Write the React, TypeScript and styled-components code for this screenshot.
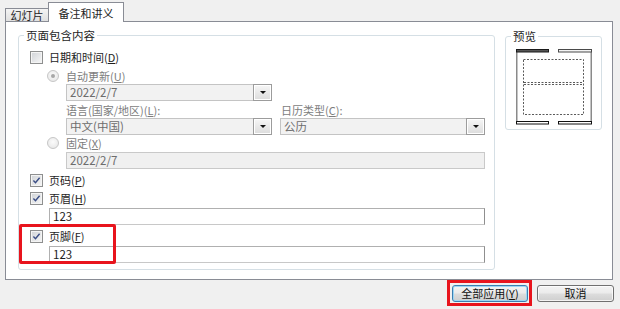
import React from 'react';
import styled, { createGlobalStyle } from 'styled-components';

const FONT = `"Microsoft YaHei", "Noto Sans CJK SC", "Noto Sans", sans-serif`;

const GlobalStyle = createGlobalStyle`
  html, body {
    margin: 0;
    padding: 0;
    background: #f0f0f0;
  }
  body {
    font-family: ${FONT};
  }
`;

const Dialog = styled.div`
  width: 620px;
  height: 309px;
  box-sizing: border-box;
  padding: 2px 6px 0 5px;
  background: #f0f0f0;
  font-family: ${FONT};
  font-size: 11px;
  color: #1e1e1e;
  display: flex;
  flex-direction: column;
  overflow: hidden;
`;

const TabBar = styled.div`
  display: flex;
  align-items: flex-end;
  height: 19px;
`;

const Tab = styled.div<{ $active?: boolean }>`
  box-sizing: border-box;
  position: relative;
  z-index: ${p => (p.$active ? 2 : 1)};
  width: ${p => (p.$active ? '76px' : '44px')};
  height: ${p => (p.$active ? '20px' : '13px')};
  margin-left: ${p => (p.$active ? '-1px' : '0')};
  margin-bottom: ${p => (p.$active ? '-1px' : '0')};
  padding-top: ${p => (p.$active ? '2px' : '0')};
  border: 1px solid #898c95;
  border-bottom: none;
  background: ${p => (p.$active ? '#fff' : 'linear-gradient(#f4f4f4, #e0e0e0)')};
  display: flex;
  align-items: center;
  justify-content: center;
  font-size: 11px;
  line-height: 1;
  color: #1e1e1e;
`;

const TabPanel = styled.div`
  box-sizing: border-box;
  width: 608px;
  height: 259px;
  border: 1px solid #898c95;
  background: #fff;
  padding: 6px 0 0 12px;
  display: flex;
  align-items: flex-start;
  gap: 10px;
`;

const Group = styled.fieldset<{ $width: number; $top?: number }>`
  box-sizing: border-box;
  flex: 0 0 auto;
  width: ${p => p.$width}px;
  min-width: 0;
  margin: ${p => p.$top ?? 0}px 0 0 0;
  padding: 0;
  border: 1px solid #d5dfe5;
  border-radius: 3px;
`;

const GroupTitle = styled.legend`
  margin-left: 5px;
  padding: 0 2px;
  font-size: 11.5px;
  line-height: 14px;
  color: #1e1e1e;
`;

const GroupBody = styled.div`
  padding: 0 9px 6px 11px;
`;

const PreviewBody = styled.div`
  padding: 6px 0 4px 1px;
  display: flex;
  justify-content: center;
`;

const Row = styled.div<{ $indent?: number; $top?: number; $gap?: number }>`
  display: flex;
  align-items: center;
  height: 16px;
  margin-left: ${p => p.$indent ?? 0}px;
  margin-top: ${p => p.$top ?? 0}px;
  gap: ${p => p.$gap ?? 6}px;
`;

const Label = styled.span<{ $disabled?: boolean; $width?: number }>`
  font-size: 11px;
  line-height: 1;
  white-space: nowrap;
  color: ${p => (p.$disabled ? '#7d7d7d' : '#1e1e1e')};
  ${p => (p.$width ? `width: ${p.$width}px; flex: 0 0 auto;` : '')}
`;

const CheckBox = styled.span`
  box-sizing: border-box;
  flex: 0 0 auto;
  width: 13px;
  height: 13px;
  border: 1px solid #8e8f8f;
  background: linear-gradient(135deg, #cfd2d6 0%, #f7f7f7 100%);
  box-shadow: inset 0 0 0 1px #f4f4f4;
  display: flex;
  align-items: center;
  justify-content: center;
`;

const Radio = styled.span<{ $checked?: boolean }>`
  box-sizing: border-box;
  flex: 0 0 auto;
  width: 12px;
  height: 12px;
  border-radius: 50%;
  border: 1px solid #c6c6c6;
  background: radial-gradient(circle at 50% 40%, #fbfbfb, #e4e4e4);
  display: flex;
  align-items: center;
  justify-content: center;

  &::after {
    content: '';
    width: 4px;
    height: 4px;
    border-radius: 50%;
    background: #a8a8a8;
    display: ${p => (p.$checked ? 'block' : 'none')};
  }
`;

const Combo = styled.div<{ $width?: number; $indent?: number; $top?: number }>`
  box-sizing: border-box;
  display: flex;
  align-items: center;
  height: 17px;
  width: ${p => (p.$width ? `${p.$width}px` : 'auto')};
  flex: ${p => (p.$width ? '0 0 auto' : '1 1 auto')};
  margin-left: ${p => p.$indent ?? 0}px;
  margin-top: ${p => p.$top ?? 0}px;
  border: 1px solid #c4c4c4;
  background: #f2f2f2;
  color: #6d6d6d;
  padding-left: 3px;
`;

const ComboValue = styled.span`
  flex: 1;
  font-size: 11.5px;
  line-height: 1;
  white-space: nowrap;
`;

const DropButton = styled.span`
  box-sizing: border-box;
  width: 19px;
  height: 17px;
  margin: -1px -1px -1px 0;
  border: 1px solid #9c9c9c;
  background: linear-gradient(#f6f6f6, #dcdcdc);
  box-shadow: inset 0 0 0 1px #fff;
  display: flex;
  align-items: center;
  justify-content: center;

  &::after {
    content: '';
    border-left: 3px solid transparent;
    border-right: 3px solid transparent;
    border-top: 3px solid #111;
  }
`;

const ComboRow = styled.div<{ $indent: number }>`
  display: flex;
  gap: 8px;
  margin-left: ${p => p.$indent}px;
`;

const Field = styled.div<{ $indent: number; $top?: number; $disabled?: boolean }>`
  box-sizing: border-box;
  height: 17px;
  margin: ${p => p.$top ?? 0}px 0 0 ${p => p.$indent}px;
  border: 1px solid ${p => (p.$disabled ? '#c9c9c9' : '#b0b0b0')};
  border-right-color: ${p => (p.$disabled ? '#c9c9c9' : '#8f8f8f')};
  border-bottom-color: ${p => (p.$disabled ? '#c9c9c9' : '#c8c8c8')};
  background: ${p => (p.$disabled ? '#f0f0f0' : '#fff')};
  color: ${p => (p.$disabled ? '#6d6d6d' : '#1e1e1e')};
  padding-left: 3px;
  display: flex;
  align-items: center;
  font-size: 11.5px;
  line-height: 1;
`;

const FooterBlock = styled.div`
  position: relative;
  margin-top: 3px;
`;

const Highlight = styled.div<{ $width: number; $height: number; $left: number; $top: number }>`
  position: absolute;
  box-sizing: border-box;
  left: ${p => p.$left}px;
  top: ${p => p.$top}px;
  width: ${p => p.$width}px;
  height: ${p => p.$height}px;
  border: 3px solid #e8141d;
  border-radius: 2px;
  pointer-events: none;
`;

const ButtonRow = styled.div`
  display: flex;
  justify-content: flex-end;
  align-items: flex-start;
  gap: 5px;
`;

const RedFrame = styled.div`
  border: 3px solid #e8141d;
  padding: 2px 1px 1px 2px;
  display: flex;
`;

const Button = styled.button<{ $default?: boolean; $width: number; $top?: number }>`
  box-sizing: border-box;
  width: ${p => p.$width}px;
  height: 17px;
  margin-top: ${p => p.$top ?? 0}px;
  padding: 0;
  font-family: ${FONT};
  font-size: 11px;
  line-height: 1;
  color: #111;
  border: 1px solid ${p => (p.$default ? '#3c7fb1' : '#707070')};
  border-radius: 3px;
  background: linear-gradient(#f3f3f3 0%, #ebebeb 48%, #dddddd 52%, #cfcfcf 100%);
  box-shadow: inset 0 0 0 1px ${p => (p.$default ? '#9ed6f3' : 'rgba(255,255,255,0.75)')};
`;

const Check = () => (
  <svg width="9" height="9" viewBox="0 0 9 9">
    <path d="M1.4 4.6 L3.5 6.8 L7.6 1.8" fill="none" stroke="#3a4d85" strokeWidth="1.4" />
  </svg>
);

const PagePreview = () => (
  <svg width="76" height="76" viewBox="0 0 76 76">
    <line x1="0.75" y1="3" x2="0.75" y2="72" stroke="#8a8a8a" strokeWidth="1.5" />
    <line x1="75.25" y1="3" x2="75.25" y2="72" stroke="#8a8a8a" strokeWidth="1.5" />
    <rect x="0.5" y="0.5" width="32" height="2.5" fill="#555" stroke="#1a1a1a" />
    <rect x="42.5" y="0.5" width="33" height="2.5" fill="#f4f4f4" stroke="#4a4a4a" />
    <rect x="0.5" y="72.5" width="32" height="2.5" fill="#fff" stroke="#111" />
    <rect x="42.5" y="72.5" width="33" height="2.5" fill="#fff" stroke="#111" />
    <rect
      x="7.5"
      y="10.5"
      width="60"
      height="55"
      fill="none"
      stroke="#5a5a5a"
      strokeDasharray="2 1.5"
    />
    <line x1="8" y1="33.5" x2="67" y2="33.5" stroke="#5a5a5a" strokeDasharray="2 1.5" />
    <line x1="8" y1="35.5" x2="67" y2="35.5" stroke="#5a5a5a" strokeDasharray="2 1.5" />
  </svg>
);

export default function App() {
  return (
    <>
      <GlobalStyle />
      <Dialog>
        <TabBar>
          <Tab>幻灯片</Tab>
          <Tab $active>备注和讲义</Tab>
        </TabBar>

        <TabPanel>
          <Group $width={477}>
            <GroupTitle>页面包含内容</GroupTitle>
            <GroupBody>
              <Row $top={7}>
                <CheckBox />
                <Label>日期和时间(<u>D</u>)</Label>
              </Row>
              <Row $top={3} $indent={17} $gap={7}>
                <Radio $checked />
                <Label $disabled>自动更新(<u>U</u>)</Label>
              </Row>
              <Combo $indent={36} $width={206}>
                <ComboValue>2022/2/7</ComboValue>
                <DropButton />
              </Combo>
              <Row $top={1} $indent={36} $gap={0}>
                <Label $disabled $width={215}>语言(国家/地区)(<u>L</u>):</Label>
                <Label $disabled>日历类型(<u>C</u>):</Label>
              </Row>
              <ComboRow $indent={36}>
                <Combo $width={206}>
                  <ComboValue>中文(中国)</ComboValue>
                  <DropButton />
                </Combo>
                <Combo>
                  <ComboValue>公历</ComboValue>
                  <DropButton />
                </Combo>
              </ComboRow>
              <Row $indent={17} $gap={7}>
                <Radio />
                <Label $disabled>固定(<u>X</u>)</Label>
              </Row>
              <Field $indent={36} $top={1} $disabled>2022/2/7</Field>
              <Row $top={3}>
                <CheckBox><Check /></CheckBox>
                <Label>页码(<u>P</u>)</Label>
              </Row>
              <Row $top={2}>
                <CheckBox><Check /></CheckBox>
                <Label>页眉(<u>H</u>)</Label>
              </Row>
              <Field $indent={19} $top={2}>123</Field>
              <FooterBlock>
                <Row>
                  <CheckBox><Check /></CheckBox>
                  <Label>页脚(<u>F</u>)</Label>
                </Row>
                <Field $indent={19} $top={2}>123</Field>
                <Highlight $left={-11} $top={-4} $width={97} $height={40} />
              </FooterBlock>
            </GroupBody>
          </Group>

          <Group $width={97} $top={1}>
            <GroupTitle>预览</GroupTitle>
            <PreviewBody>
              <PagePreview />
            </PreviewBody>
          </Group>
        </TabPanel>

        <ButtonRow>
          <RedFrame>
            <Button $default $width={76}>全部应用(<u>Y</u>)</Button>
          </RedFrame>
          <Button $width={77} $top={5}>取消</Button>
        </ButtonRow>
      </Dialog>
    </>
  );
}
